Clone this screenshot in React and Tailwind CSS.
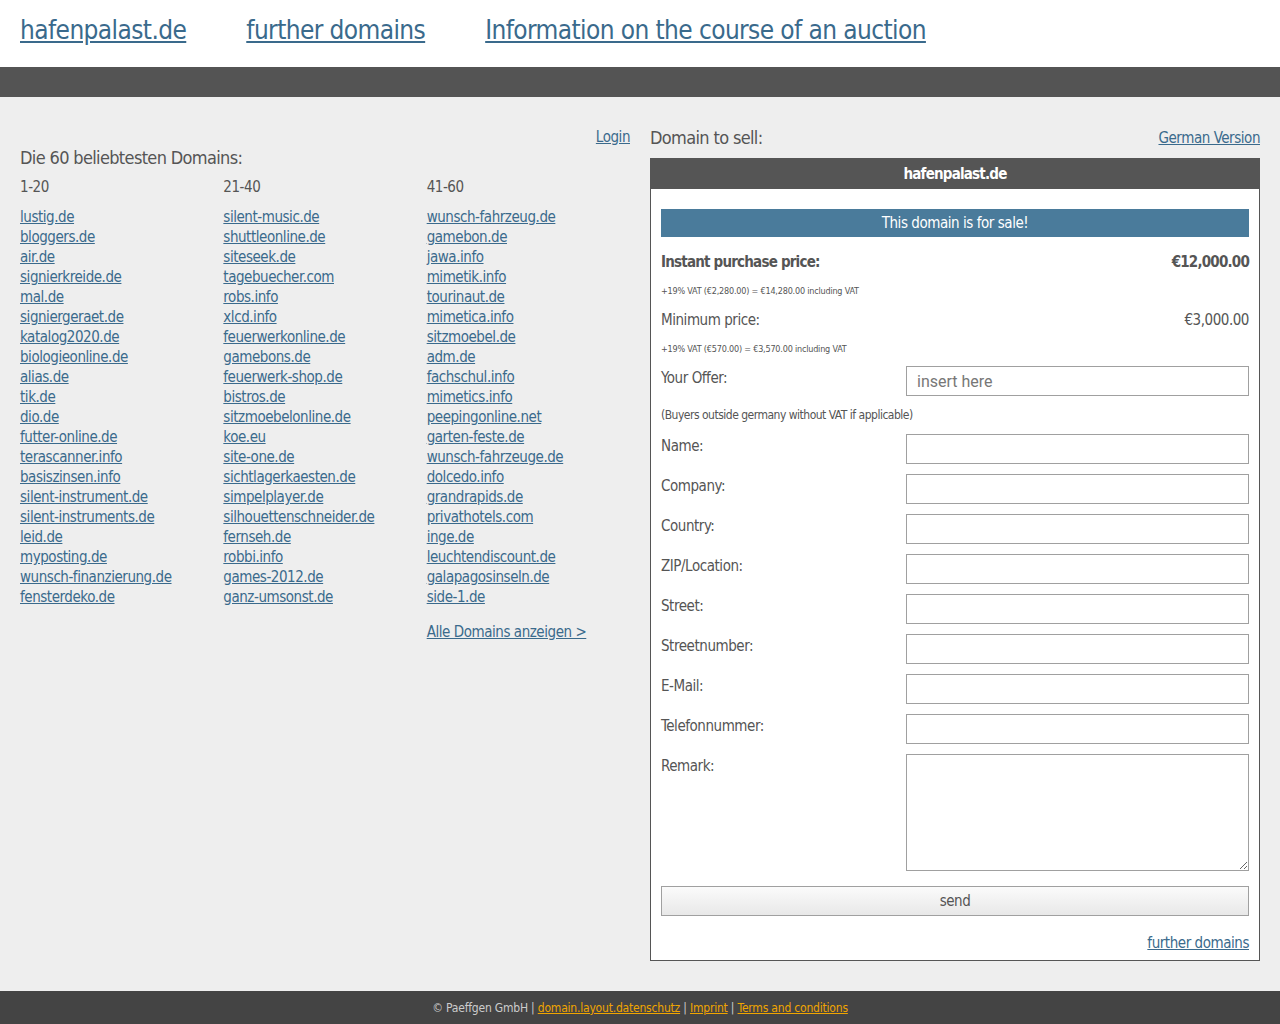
import React from "react";

const F = { fontFamily: "'Liberation Sans Narrow', 'DejaVu Sans Condensed', 'Roboto Condensed', 'Liberation Sans', sans-serif" };

const col1 = ["lustig.de","bloggers.de","air.de","signierkreide.de","mal.de","signiergeraet.de","katalog2020.de","biologieonline.de","alias.de","tik.de","dio.de","futter-online.de","terascanner.info","basiszinsen.info","silent-instrument.de","silent-instruments.de","leid.de","myposting.de","wunsch-finanzierung.de","fensterdeko.de"];
const col2 = ["silent-music.de","shuttleonline.de","siteseek.de","tagebuecher.com","robs.info","xlcd.info","feuerwerkonline.de","gamebons.de","feuerwerk-shop.de","bistros.de","sitzmoebelonline.de","koe.eu","site-one.de","sichtlagerkaesten.de","simpelplayer.de","silhouettenschneider.de","fernseh.de","robbi.info","games-2012.de","ganz-umsonst.de"];
const col3 = ["wunsch-fahrzeug.de","gamebon.de","jawa.info","mimetik.info","tourinaut.de","mimetica.info","sitzmoebel.de","adm.de","fachschul.info","mimetics.info","peepingonline.net","garten-feste.de","wunsch-fahrzeuge.de","dolcedo.info","grandrapids.de","privathotels.com","inge.de","leuchtendiscount.de","galapagosinseln.de","side-1.de"];

const linkCls = "text-[15px] leading-[20px] tracking-[-0.45px] text-[#3a6a8c] underline";

function Col({ title, items, extra }) {
  return (
    <div className="flex flex-col">
      <div className="text-[15px] leading-[20px] tracking-[-0.45px] text-[#555] mb-[10px]">{title}</div>
      {items.map((d) => (
        <a key={d} href="#" className={`${linkCls} self-start`}>{d}</a>
      ))}
      {extra}
    </div>
  );
}

function Row({ label, textarea }) {
  return (
    <div className="flex mb-[10px]">
      <div className="w-[245px] text-[15px] leading-[20px] tracking-[-0.45px] pt-[2px] text-[#555]">{label}</div>
      {textarea ? (
        <textarea className="flex-1 h-[117px] border border-[#a0a0a0] bg-white resize-y" />
      ) : (
        <input className="flex-1 h-[30px] border border-[#a0a0a0] bg-white" />
      )}
    </div>
  );
}

export default function App() {
  return (
    <div style={F} className="min-h-[1024px] bg-[#eeeeee] flex flex-col">
      <header className="bg-white h-[67px] flex items-start pt-[13px] px-[20px] gap-[60px]">
        <a href="#" className="text-[26px] leading-[34px] tracking-[-0.6px] text-[#3a6a8c] underline">hafenpalast.de</a>
        <a href="#" className="text-[26px] leading-[34px] tracking-[-0.6px] text-[#3a6a8c] underline">further domains</a>
        <a href="#" className="text-[26px] leading-[34px] tracking-[-0.6px] text-[#3a6a8c] underline">Information on the course of an auction</a>
      </header>
      <div className="h-[30px] bg-[#545454]" />
      <main className="flex-1 flex gap-[20px] px-[20px] pt-[30px] pb-[30px]">
        <section className="w-[610px] flex flex-col">
          <div className="flex justify-end">
            <a href="#" className={linkCls}>Login</a>
          </div>
          <h2 className="text-[18px] leading-[22px] tracking-[-0.65px] text-[#555] mb-[8px]">Die 60 beliebtesten Domains:</h2>
          <div className="grid grid-cols-3">
            <Col title="1-20" items={col1} />
            <Col title="21-40" items={col2} />
            <Col
              title="41-60"
              items={col3}
              extra={<a href="#" className={`mt-[15px] ${linkCls} self-start`}>Alle Domains anzeigen &gt;</a>}
            />
          </div>
        </section>
        <section className="w-[610px] flex flex-col">
          <div className="flex justify-between items-center h-[22px] mb-[9px]">
            <h2 className="text-[18px] leading-[22px] tracking-[-0.65px] text-[#555]">Domain to sell:</h2>
            <a href="#" className={linkCls}>German Version</a>
          </div>
          <div className="border border-[#555] bg-white">
            <div className="bg-[#555555] h-[30px] flex items-center justify-center text-white font-bold text-[15px] tracking-[-0.8px]">hafenpalast.de</div>
            <div className="px-[10px] pt-[20px] pb-[7px]">
              <div className="bg-[#4a7b9b] h-[28px] flex items-center justify-center text-white text-[15px] tracking-[-0.45px]">This domain is for sale!</div>
              <div className="flex justify-between mt-[15px] text-[15px] leading-[20px] tracking-[-0.8px] text-[#555] font-bold">
                <span>Instant purchase price:</span><span>€12,000.00</span>
              </div>
              <div className="text-[9px] leading-[14px] tracking-[-0.2px] text-[#555] mt-[12px]">+19% VAT (€2,280.00) = €14,280.00 including VAT</div>
              <div className="flex justify-between mt-[12px] text-[15px] leading-[20px] tracking-[-0.45px] text-[#555]">
                <span>Minimum price:</span><span>€3,000.00</span>
              </div>
              <div className="text-[9px] leading-[14px] tracking-[-0.2px] text-[#555] mt-[12px]">+19% VAT (€570.00) = €3,570.00 including VAT</div>
              <div className="flex mt-[10px]">
                <div className="w-[245px] text-[15px] leading-[20px] tracking-[-0.45px] pt-[2px] text-[#555]">Your Offer:</div>
                <input placeholder="insert here" style={{ fontFamily: "Roboto, 'Liberation Sans', sans-serif" }} className="flex-1 h-[30px] border border-[#a0a0a0] bg-white px-[10px] text-[16px] placeholder:text-[#777]" />
              </div>
              <div className="text-[12px] leading-[16px] tracking-[-0.5px] text-[#555] mt-[11px] mb-[11px]">(Buyers outside germany without VAT if applicable)</div>
              <Row label="Name:" />
              <Row label="Company:" />
              <Row label="Country:" />
              <Row label="ZIP/Location:" />
              <Row label="Street:" />
              <Row label="Streetnumber:" />
              <Row label="E-Mail:" />
              <Row label="Telefonnummer:" />
              <Row label="Remark:" textarea />
              <button className="w-full h-[30px] mt-[5px] border border-[#a0a0a0] bg-gradient-to-b from-[#fbfbfb] to-[#e8e8e8] text-[#555] text-[15px] tracking-[-0.45px]">send</button>
              <div className="flex justify-end mt-[17px]">
                <a href="#" className={linkCls}>further domains</a>
              </div>
            </div>
          </div>
        </section>
      </main>
      <footer className="h-[33px] bg-[#444444] flex items-center justify-center text-[12px] tracking-[-0.2px] text-[#cccccc]">
        <span>© Paeffgen GmbH |&nbsp;</span>
        <a href="#" className="text-[#f0a500] underline">domain.layout.datenschutz</a>
        <span>&nbsp;|&nbsp;</span>
        <a href="#" className="text-[#f0a500] underline">Imprint</a>
        <span>&nbsp;|&nbsp;</span>
        <a href="#" className="text-[#f0a500] underline">Terms and conditions</a>
      </footer>
    </div>
  );
}
